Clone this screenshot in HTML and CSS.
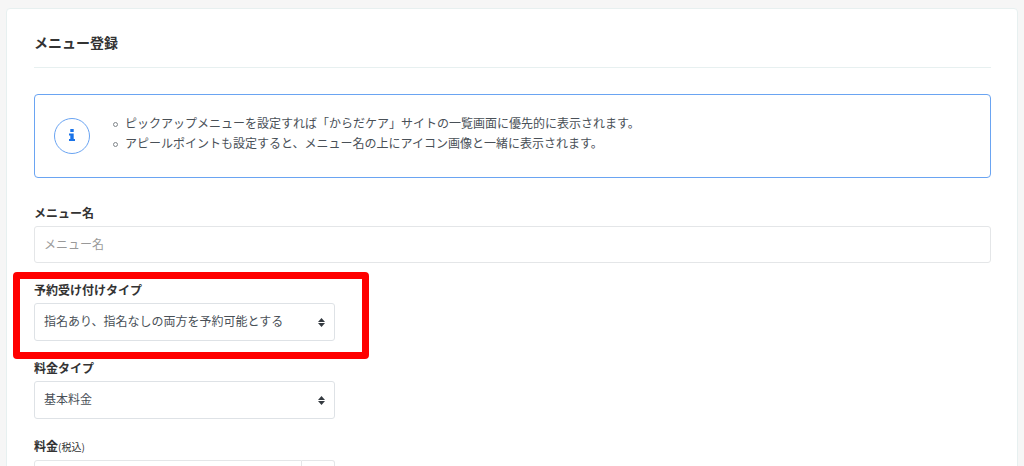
FILE: index.html
```html
<!DOCTYPE html>
<html lang="ja">
<head>
    <meta charset="UTF-8">
    <meta name="viewport" content="width=device-width, initial-scale=1.0">
    <title>メニュー登録</title>
    <link rel="stylesheet" href="styles.css">
</head>
<body>
    <main class="card">
        <h1 class="card-title">メニュー登録</h1>

        <div class="notice">
            <span class="notice-icon">
                <svg width="6" height="12" viewBox="0 0 6 12" aria-hidden="true">
                    <path d="M1.3 0h3.4v3H1.3zM0 4.5h4.7V10H6v2H0v-2h1.3V6.5H0z" fill="currentColor"/>
                </svg>
            </span>
            <ul class="notice-list">
                <li>ピックアップメニューを設定すれば「からだケア」サイトの一覧画面に優先的に表示されます。</li>
                <li>アピールポイントも設定すると、メニュー名の上にアイコン画像と一緒に表示されます。</li>
            </ul>
        </div>

        <form class="menu-form">
            <div class="form-group wide">
                <label for="menu-name">メニュー名</label>
                <input type="text" id="menu-name" class="form-control" placeholder="メニュー名">
            </div>
            <div class="form-group highlight">
                <label for="reserve-type">予約受け付けタイプ</label>
                <select id="reserve-type" class="form-control form-select">
                    <option>指名あり、指名なしの両方を予約可能とする</option>
                </select>
                <svg class="select-arrow" width="7" height="9" viewBox="0 0 7 9" aria-hidden="true">
                    <path d="M3.5 0L7 4H0zM3.5 9L0 5h7z" fill="currentColor"/>
                </svg>
            </div>
            <div class="form-group">
                <label for="price-type">料金タイプ</label>
                <select id="price-type" class="form-control form-select">
                    <option>基本料金</option>
                </select>
                <svg class="select-arrow" width="7" height="9" viewBox="0 0 7 9" aria-hidden="true">
                    <path d="M3.5 0L7 4H0zM3.5 9L0 5h7z" fill="currentColor"/>
                </svg>
            </div>
            <div class="form-group">
                <label for="price">料金<small>(税込)</small></label>
                <div class="input-group">
                    <input type="text" id="price" class="form-control">
                    <span class="input-addon"></span>
                </div>
            </div>
        </form>
    </main>
</body>
</html>
```

FILE: styles.css
```css
*,
*::before,
*::after {
    box-sizing: border-box;
}
body {
    margin: 0;
    padding: 8px 6px;
    background-color: #f6f6f6;
    color: #495057;
    font-family: "Noto Sans CJK JP", sans-serif;
    font-size: 12px;
    line-height: 20px;
}
body::-webkit-scrollbar {
    display: none;
}
.card {
    background: #fff;
    border: 1px solid #e7f0f0;
    border-radius: 4px;
    padding: 22px 26px 24px 27px;
}
.card-title {
    margin: 0 0 26px;
    padding-bottom: 14px;
    border-bottom: 1px solid #e7f0f0;
    color: #333;
    font-size: 14px;
    font-weight: bold;
    line-height: 22px;
}
.notice {
    display: flex;
    align-items: center;
    gap: 23px;
    min-height: 84px;
    margin-bottom: 25px;
    padding: 0 19px;
    border: 1px solid #6aa4f2;
    border-radius: 4px;
}
.notice-icon {
    display: flex;
    align-items: center;
    justify-content: center;
    flex: none;
    width: 36px;
    height: 36px;
    padding-bottom: 2px;
    border: 1px solid #6aa4f2;
    border-radius: 50%;
    color: #1a73e8;
}
.notice-list {
    margin: 0 0 6px;
    padding: 0;
    list-style: none;
}
.notice-list li {
    display: flex;
    align-items: center;
    gap: 7px;
}
.notice-list li::before {
    content: "";
    flex: none;
    width: 5px;
    height: 5px;
    margin-top: 3px;
    border: 1px solid #80868b;
    border-radius: 50%;
}
.menu-form {
    display: grid;
    grid-template-columns: repeat(3, 1fr);
    gap: 17px 27px;
}
.form-group {
    position: relative;
    grid-column: 1;
}
.form-group.wide {
    grid-column: 1 / -1;
}
.form-group label {
    display: block;
    margin-bottom: 4px;
    color: #333;
    font-weight: bold;
    line-height: 19px;
}
.form-group small {
    font-size: 10px;
    font-weight: normal;
}
.form-control {
    display: block;
    width: 100%;
    height: 37px;
    padding: 0 9px 3px;
    border: 1px solid #e4e6e8;
    border-radius: 3px;
    background: #fff;
    color: #495057;
    font: inherit;
}
.form-control::placeholder {
    color: #999;
}
.form-select {
    appearance: none;
    height: 38px;
    padding-right: 28px;
    border-color: #dee2e6;
}
.select-arrow {
    position: absolute;
    right: 10px;
    bottom: 14px;
    color: #343a40;
    pointer-events: none;
}
.input-group {
    display: flex;
}
.input-group .form-control {
    flex: 1;
    min-width: 0;
    border-radius: 3px 0 0 3px;
}
.input-addon {
    width: 33px;
    border: 1px solid #e4e6e8;
    border-left: 0;
    border-radius: 0 3px 3px 0;
}
/* red frame around the reservation type */
.highlight::after {
    content: "";
    position: absolute;
    inset: -8px -34px -18px -21px;
    border: 7px solid #f00;
    border-radius: 4px;
    pointer-events: none;
}
```
